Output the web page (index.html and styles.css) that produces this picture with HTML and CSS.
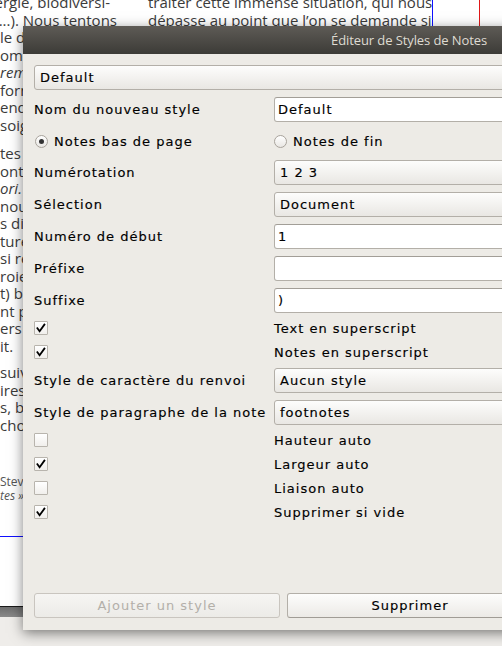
FILE: index.html
```html
<!DOCTYPE html>
<html lang="fr">
<head>
<meta charset="utf-8">
<title>Éditeur de Styles de Notes</title>
<link rel="stylesheet" href="styles.css">
</head>
<body>
<div class="app">
  <div class="doc">
    <div class="doc-cols">
      <div class="col col-left">
        <p class="para">
          <span class="ln end end1"><span>énergie, biodiversi-</span></span>
          <span class="ln end end2"><span>(...). Nous tentons</span></span>
          <span class="ln">le d</span>
          <span class="ln">om</span>
          <span class="ln it">rem</span>
          <span class="ln">forn</span>
          <span class="ln">end</span>
          <span class="ln">soig</span>
        </p>
        <p class="para p2">
          <span class="ln">tes c</span>
          <span class="ln">onta</span>
          <span class="ln it">ori.</span>
          <span class="ln">nou</span>
          <span class="ln">s di</span>
          <span class="ln">ture</span>
          <span class="ln">si re</span>
          <span class="ln">roie</span>
          <span class="ln">t) b</span>
          <span class="ln">nt p</span>
          <span class="ln">ers l</span>
          <span class="ln">it.</span>
        </p>
        <p class="para p3">
          <span class="ln">suiv</span>
          <span class="ln">ires</span>
          <span class="ln">s, b</span>
          <span class="ln">cho</span>
        </p>
        <p class="note">
          <span class="ln">Steve</span>
          <span class="ln it">tes »</span>
        </p>
      </div>
      <div class="col col-right">
        <span class="ln">traiter cette immense situation, qui nous</span>
        <span class="ln">dépasse au point que l’on se demande si</span>
      </div>
    </div>
    <div class="guide guide-blue-v"></div>
    <div class="guide guide-red-v"></div>
    <div class="guide guide-blue-h"></div>
  </div>
  <div class="hscroll"></div>

  <div class="dialog">
    <div class="titlebar"><span class="title">Éditeur de Styles de Notes</span></div>
    <div class="dlg-body">
      <div class="form">
        <div class="combo wide">Default</div>

        <div class="row"><span class="lbl">Nom du nouveau style</span><div class="input">Default</div></div>

        <div class="row radio-row">
          <div class="opt"><span class="radio on"></span><span>Notes bas de page</span></div>
          <div class="opt"><span class="radio"></span><span>Notes de fin</span></div>
        </div>

        <div class="row"><span class="lbl">Numérotation</span><div class="combo">1 2 3</div></div>
        <div class="row"><span class="lbl">Sélection</span><div class="combo">Document</div></div>
        <div class="row"><span class="lbl">Numéro de début</span><div class="input">1</div></div>
        <div class="row"><span class="lbl">Préfixe</span><div class="input"></div></div>
        <div class="row"><span class="lbl">Suffixe</span><div class="input">)</div></div>

        <div class="checks">
          <div class="crow"><span class="cb"><svg viewBox="0 0 14 14" width="14" height="14"><path d="M3.4 7.2 L5.6 10.2 L10.4 3.6" class="tick"/></svg></span><span class="ctext">Text en superscript</span></div>
          <div class="crow"><span class="cb"><svg viewBox="0 0 14 14" width="14" height="14"><path d="M3.4 7.2 L5.6 10.2 L10.4 3.6" class="tick"/></svg></span><span class="ctext">Notes en superscript</span></div>
        </div>

        <div class="row after-checks"><span class="lbl">Style de caractère du renvoi</span><div class="combo">Aucun style</div></div>
        <div class="row"><span class="lbl">Style de paragraphe de la note</span><div class="combo">footnotes</div></div>

        <div class="checks">
          <div class="crow"><span class="cb"></span><span class="ctext">Hauteur auto</span></div>
          <div class="crow"><span class="cb"><svg viewBox="0 0 14 14" width="14" height="14"><path d="M3.4 7.2 L5.6 10.2 L10.4 3.6" class="tick"/></svg></span><span class="ctext">Largeur auto</span></div>
          <div class="crow"><span class="cb"></span><span class="ctext">Liaison auto</span></div>
          <div class="crow"><span class="cb"><svg viewBox="0 0 14 14" width="14" height="14"><path d="M3.4 7.2 L5.6 10.2 L10.4 3.6" class="tick"/></svg></span><span class="ctext">Supprimer si vide</span></div>
        </div>
      </div>

      <div class="buttons">
        <button class="btn" disabled>Ajouter un style</button>
        <button class="btn">Supprimer</button>
      </div>
    </div>
  </div>
</div>
</body>
</html>
```

FILE: styles.css
```css
html, body {
  margin: 0;
  padding: 0;
  width: 502px;
  height: 646px;
  overflow: hidden;
  background: #efedea;
}

.app {
  position: relative;
  width: 502px;
  height: 646px;
  overflow: hidden;
}

/* ---------- background document ---------- */
.doc {
  position: relative;
  height: 606px;
  background: #ffffff;
  border-bottom: 1px solid #1a1a1a;
  overflow: hidden;
  font-family: "Open Sans", "Noto Sans", sans-serif;
  font-size: 15px;
  line-height: 17.5px;
  color: #3b3b3b;
}

.doc-cols {
  display: flex;
  margin-top: -6px;
}

.col-left {
  width: 118px;
  flex: none;
}

.col-right {
  width: 284px;
  margin-left: 30px;
  flex: none;
}

.ln {
  display: block;
  white-space: nowrap;
}

.end {
  display: flex;
  justify-content: flex-end;
}

.end1 {
  width: 110px;
}

.end2 {
  width: 117px;
}

.it {
  font-style: italic;
}

.para {
  margin: 0;
}

.p2 {
  margin-top: 11px;
}

.p3 {
  margin-top: 9px;
}

.note {
  margin: 41px 0 0;
  font-size: 12px;
  line-height: 14px;
  color: #555555;
}

.guide {
  position: absolute;
}

.guide-blue-v {
  left: 432px;
  top: 0;
  width: 1px;
  height: 537px;
  background: #1010ff;
}

.guide-red-v {
  left: 479px;
  top: 0;
  width: 1px;
  height: 606px;
  background: #e01818;
}

.guide-blue-h {
  left: 0;
  top: 536px;
  width: 433px;
  height: 1px;
  background: #1010ff;
}

.hscroll {
  height: 10px;
  background: linear-gradient(#6d6d6d, #8a8a8a);
}

/* ---------- dialog ---------- */
.dialog {
  position: absolute;
  left: 23px;
  top: 26px;
  width: 521px;
  height: 604px;
  background: #edebe6;
  box-shadow: 0 3px 12px rgba(0, 0, 0, 0.5);
  display: flex;
  flex-direction: column;
  font-family: "DejaVu Sans", "Liberation Sans", sans-serif;
  font-size: 13px;
  letter-spacing: 1px;
  color: #000000;
  -webkit-text-stroke: 0.15px #000000;
}

.titlebar {
  height: 28px;
  flex: none;
  background: linear-gradient(#5e5b56, #3c3b37);
  display: flex;
  align-items: center;
  justify-content: flex-end;
  padding-right: 57px;
}

.title {
  font-family: "Open Sans", "Noto Sans", sans-serif;
  font-size: 13px;
  letter-spacing: -0.1px;
  color: #dfdbd2;
  -webkit-text-stroke: 0;
}

.dlg-body {
  flex: 1;
  display: flex;
  flex-direction: column;
  padding: 11px 11px 12px;
}

.form {
  display: flex;
  flex-direction: column;
  gap: 7px;
}

.row {
  display: grid;
  grid-template-columns: 234px 1fr;
  column-gap: 6px;
  align-items: center;
  height: 25px;
}

.lbl {
  white-space: nowrap;
}

.radio-row {
  height: 24px;
}

.opt {
  display: flex;
  align-items: center;
  gap: 6px;
  white-space: nowrap;
}

.opt:first-child {
  padding-left: 1px;
}

.radio {
  width: 13px;
  height: 13px;
  box-sizing: border-box;
  border-radius: 50%;
  border: 1px solid #a8a39c;
  background: linear-gradient(#ffffff, #e9e7e3);
  display: flex;
  align-items: center;
  justify-content: center;
}

.radio.on::after {
  content: "";
  width: 5px;
  height: 5px;
  border-radius: 50%;
  background: #333333;
}

.combo,
.input {
  height: 25px;
  box-sizing: border-box;
  border: 1px solid #b3afa8;
  border-radius: 3px;
  display: flex;
  align-items: center;
  white-space: nowrap;
}

.combo {
  background: linear-gradient(#fdfdfc, #e9e7e3);
  padding-left: 5px;
}

.input {
  background: #ffffff;
  border-top-color: #a29e97;
  padding-left: 3px;
}

.checks {
  display: flex;
  flex-direction: column;
  margin-top: -4px;
}

.after-checks {
  margin-top: -3px;
}

.crow {
  display: grid;
  grid-template-columns: 234px 1fr;
  column-gap: 6px;
  align-items: center;
  height: 24px;
}

.cb {
  width: 14px;
  height: 14px;
  box-sizing: border-box;
  border: 1px solid #b8b4ad;
  border-radius: 1px;
  background: linear-gradient(#ffffff, #f1efec);
  position: relative;
}

.cb svg {
  position: absolute;
  left: -1px;
  top: -1px;
}

.tick {
  fill: none;
  stroke: #000000;
  stroke-width: 1.8;
  stroke-linecap: square;
}

.ctext {
  white-space: nowrap;
}

.buttons {
  margin-top: auto;
  display: grid;
  grid-template-columns: 1fr 1fr;
  column-gap: 7px;
}

.btn {
  height: 25px;
  box-sizing: border-box;
  border: 1px solid #b3afa8;
  border-bottom-color: #a09c95;
  border-radius: 3px;
  background: linear-gradient(#fdfdfc, #eceae6);
  font-family: "DejaVu Sans", "Liberation Sans", sans-serif;
  font-size: 13px;
  letter-spacing: 1px;
  color: #000000;
  -webkit-text-stroke: 0.15px #000000;
  padding: 0;
}

.btn:disabled {
  color: #b3afa9;
  -webkit-text-stroke: 0;
  background: linear-gradient(#f6f5f3, #ecebe7);
  border-color: #c9c5bf;
}
```
